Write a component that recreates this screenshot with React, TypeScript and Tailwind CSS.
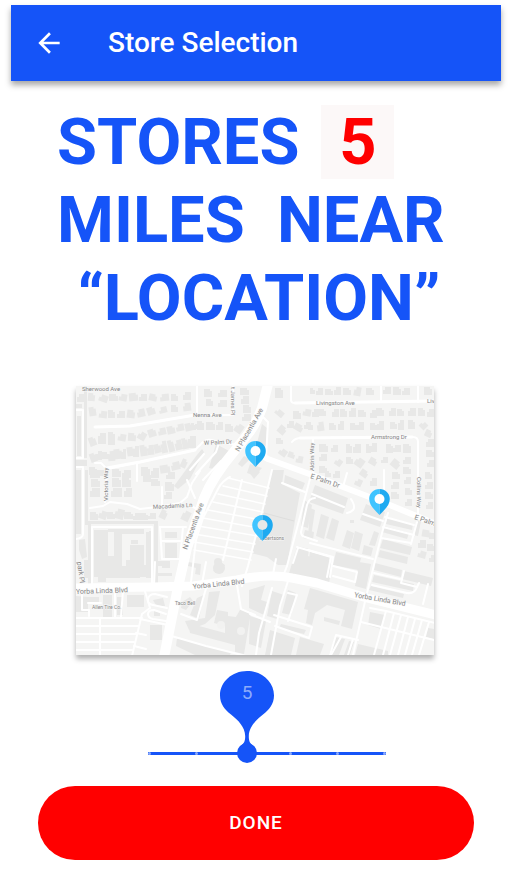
import { useState } from "react";
import { MdArrowBack } from "react-icons/md";

type House = [number, number, number, number, number?];

// x, y, width, height, rotation
const houses: House[] = [
  // Sherwood Ave, south side
  [77, 394, 9, 8, 0], [88, 393, 7, 8, 5], [99, 395, 9, 7, 20], [109, 394, 9, 7, 0], [119, 394, 8, 7, 10],
  [129, 393, 9, 8, -5], [139, 394, 8, 7, 0], [149, 394, 8, 7, 12], [160, 394, 9, 7, -6], [171, 394, 7, 7, 0],
  [183, 392, 8, 8, 0],
  // Nenna Ave, north side
  [89, 407, 7, 9, -8], [99, 411, 8, 7, 6], [108, 410, 7, 8, 0], [117, 411, 8, 7, 0], [127, 410, 8, 8, 8],
  [137, 409, 8, 8, -12], [147, 407, 8, 8, -18], [159, 407, 8, 6, -14], [171, 405, 7, 7, 0], [183, 403, 8, 8, -8],
  // Nenna Ave, south side
  [89, 437, 7, 9, -20], [98, 433, 8, 11, 0], [108, 432, 7, 13, 0], [118, 434, 8, 7, 10], [128, 433, 8, 8, 4],
  [138, 432, 8, 8, 30], [148, 429, 8, 8, -18], [158, 428, 8, 7, -12], [167, 426, 8, 8, -12], [176, 424, 8, 7, -10],
  [185, 423, 8, 8, -12], [195, 421, 7, 8, 0],
  // W Palm Dr, north side
  [90, 453, 7, 9, -20], [96, 451, 6, 9, 0], [102, 452, 7, 7, 0], [108, 451, 7, 10, -5], [114, 449, 8, 10, -8],
  [121, 449, 5, 10, 0], [127, 447, 8, 9, -8], [133, 446, 6, 11, 0], [140, 445, 7, 11, -8], [147, 445, 7, 10, -6],
  [154, 444, 7, 9, -14], [161, 441, 6, 12, -12], [168, 440, 6, 12, -14], [175, 440, 7, 10, -14],
  [182, 438, 6, 11, -12], [188, 436, 8, 12, 0],
  // W Palm Dr, south side
  [89, 467, 8, 8, 0], [98, 470, 6, 6, 0], [112, 469, 9, 8, 0], [122, 470, 9, 8, 0], [141, 467, 9, 9, 0],
  [151, 468, 8, 8, 0], [160, 465, 10, 8, -8], [171, 462, 9, 8, -14], [181, 459, 6, 9, 25],
  // Victoria Way
  [90, 470, 10, 8, 0], [91, 479, 9, 8, 0], [90, 488, 10, 9, 0], [112, 478, 9, 9, 0], [111, 488, 11, 9, 0],
  [122, 478, 9, 9, 0], [124, 488, 8, 9, 0], [143, 473, 8, 9, 0], [151, 470, 8, 8, 0], [151, 479, 9, 7, 0],
  [166, 472, 9, 7, 0], [165, 482, 9, 9, 0], [164, 492, 8, 7, 0],
  // Macadamia Ln, south side
  [90, 512, 8, 8, 0], [99, 511, 8, 8, 20], [107, 512, 8, 7, 0], [115, 509, 9, 10, 14], [124, 512, 9, 7, 0],
  [133, 513, 8, 7, 0], [140, 513, 8, 7, 0], [148, 513, 8, 6, 0], [160, 510, 7, 9, 25], [182, 511, 8, 10, 25],
  // St James Pl
  [204, 389, 8, 8, 0], [218, 390, 9, 7, 0], [206, 399, 7, 7, 0], [218, 400, 9, 7, 0], [240, 388, 9, 7, 0],
  [241, 396, 8, 8, 0], [243, 405, 8, 8, 0], [242, 414, 9, 7, 0],
  [191, 423, 5, 7, 0], [197, 423, 7, 7, 0], [206, 422, 9, 8, 0], [216, 422, 7, 8, 0], [225, 424, 8, 8, 0],
  [235, 424, 8, 9, 35],
  // East of N Placentia Ave
  [275, 388, 8, 10, 0], [275, 410, 9, 6, 40], [293, 411, 8, 8, 0], [303, 409, 8, 7, 10], [278, 426, 8, 8, 40],
  [287, 421, 7, 7, 0], [294, 424, 9, 7, 30], [304, 422, 7, 7, 0], [276, 438, 7, 6, 0], [279, 449, 8, 7, 35],
  [288, 452, 7, 6, 20], [296, 456, 7, 7, 10],
  // Livingston Ave
  [310, 388, 5, 6, 0], [316, 388, 7, 7, 0], [325, 389, 8, 6, 0], [334, 387, 7, 8, 0], [343, 388, 8, 7, 0],
  [354, 387, 7, 9, 10], [366, 388, 8, 7, 0], [383, 387, 8, 7, 0], [393, 387, 8, 8, 0], [402, 388, 8, 7, 0],
  [424, 387, 8, 8, 0],
  [312, 409, 7, 8, 0], [319, 409, 7, 7, 0], [332, 409, 7, 8, 0], [340, 409, 7, 8, 0], [349, 408, 7, 9, 0],
  [358, 410, 8, 7, 0], [370, 410, 7, 8, 0], [376, 408, 8, 8, 0], [389, 408, 7, 8, 0], [397, 409, 7, 7, 0],
  [408, 408, 8, 8, 0], [418, 408, 7, 8, 0], [427, 409, 7, 8, 0],
  // Armstrong Dr, north side
  [308, 423, 5, 7, 0], [317, 422, 7, 9, -8], [329, 423, 7, 7, 0], [338, 421, 6, 9, 0], [350, 423, 7, 7, 0],
  [357, 422, 7, 8, 0], [370, 423, 7, 7, 0], [377, 421, 7, 9, 0], [390, 422, 7, 7, 0], [398, 420, 6, 10, 0],
  [408, 420, 7, 9, 0], [420, 422, 7, 7, 45], [425, 430, 7, 7, 25], [426, 439, 8, 8, 0], [426, 450, 8, 7, 0],
  [427, 460, 7, 7, 0],
  // Armstrong Dr, south side
  [319, 444, 9, 8, 0], [331, 445, 7, 7, 0], [346, 444, 6, 9, 0], [353, 444, 8, 9, 0], [366, 444, 5, 9, 0],
  [370, 443, 7, 9, 0], [386, 444, 7, 9, 0], [393, 445, 8, 7, 0], [403, 444, 8, 9, 0],
  [319, 454, 8, 7, 0], [319, 466, 8, 7, 0], [335, 459, 7, 7, 35], [346, 457, 7, 7, 0], [355, 458, 9, 9, 35],
  [369, 458, 8, 7, 30], [381, 457, 7, 6, 0], [391, 460, 9, 8, 40], [403, 457, 8, 7, 0], [403, 467, 8, 7, 0],
  // North of E Palm Dr
  [333, 471, 7, 7, 0], [325, 471, 6, 6, 0], [355, 479, 7, 7, 25], [360, 470, 8, 7, 35], [370, 478, 7, 8, 0],
  [392, 472, 8, 7, 0], [391, 482, 8, 7, 0], [391, 492, 8, 7, 0], [404, 477, 7, 7, 0], [405, 488, 7, 7, 0],
  [405, 499, 7, 7, 0], [425, 472, 7, 7, 0], [425, 482, 8, 7, 0], [425, 492, 8, 7, 0], [426, 502, 7, 7, 0],
  // South of E Palm Dr
  [422, 530, 9, 7, 10], [418, 540, 8, 8, 0], [429, 533, 7, 6, 0], [418, 551, 8, 7, 15], [427, 544, 8, 7, 0],
  [429, 555, 6, 7, 0],
];

const buildings = [
  // West frontage
  "M84 386h3v72h-3z", "M76 404h6v4h-6z", "M77 416h4v40h-4z", "M76 460h11v6h-11z", "M76 470h5v64h-5z",
  "M85 470h3v55h-3z", "M79 540l6-1 2 18-5 2-3-9z",
  // Shopping block
  "M88 521h70v64h-4v-61h-63v61h-3z", "M94 530h14v26h6v-27h30v5h-22v32h8v-21h14v20h5v-34h4v46H94z",
  "M108 529h36v3h-36z", "M131 540h7v4h-7z", "M98 532h8v50h-8z", "M146 532h6v46h-6z",
  "M165 532h12v6h-12z", "M165 543h12v15h-12z", "M158 561h12v5h-12z",
  "M84 560h6v18h-6z", "M98 560h16v6h12v-6h14v18h-42z", "M157 573h15v3h-15z", "M162 565h8v3h-8z",
  // Triangular lots beside the avenue
  "M216 444l15 8-9 19-13-3z", "M262 424l5 4-1 18-9-3z", "M244 456l6 3-8 8-4-3z", "M250 464l12 4-7 8-8-3z",
  "M197 455l5-6 2 3-14 27-12 10-4-3z", "M249 472l6-4 5 4-6 7z",
  // Albertsons
  "M272 470h12l-2 14 18 9-13 72h-9l-11-8-16-4z",
  "M285 475l20 8-3 7-18-7z", "M304 500l8 5-4 23-7-2z", "M305 530l9 2-1 8-10-2z", "M297 546l12 3-2 16-14-2z",
  // Along E Palm Dr
  "M315 485l33 13-5 16-34-12z", "M310 508l5 2-4 27h-3z", "M321 514l8 3-5 22-8-3z", "M332 518l7 3-5 20-8-3z",
  "M347 530l7 3-4 16-8-3z", "M355 531l8 3-4 17-8-3z", "M366 504l19 8-5 15-20-7z", "M374 531l5 2-4 13-6-1z",
  "M364 545l9 3-2 8-9-2z", "M350 520h4v3h-4z", "M336 552l25 6-3 12-25-5z",
  "M310 551l20 5-3 16-19-5z", "M387 517l26 7-1 6-26-6z", "M384 526l25 7-2 6-25-7z",
  "M383 539l29 8-2 8-30-7z", "M380 550l28 7-1 7-29-7z", "M417 520l4 1-3 15-5-1z",
  // Between the lots north of Yorba Linda Blvd
  "M295 553l38 9-5 26-40-11z", "M359 562l12 2-5 25-11-3z", "M375 563l27 7-1 7-27-7z", "M374 575l40 9-1 7-41-9z",
  "M404 571l29 7-2 8-29-7z", "M371 586l33 8-1 4-34-8z",
  "M188 562l13 2-1 11-5-1 1-6-8-2z", "M213 571l7-9 5 3-5 9z",
  // South of Yorba Linda Blvd, west half
  "M127 595h17v12h-17z", "M103 595h9v22h-9z", "M76 596l12 1v15H76z", "M83 597h16v5H83z", "M117 597h6v18h-6z",
  "M150 625h12v15h-12z", "M182 602l8-5 3 4-7 9-5-2z", "M153 600l10-2 2 8-8 1z", "M154 611h6v5h-6z",
  "M197 598l7-3-5 24-9-4z", "M209 592l11-1-5 24-10 9-16 6-4-9 20-3z",
  "M188 623l37 10v-7l-11-3 3-13 11 2v4l8 1 5-9 10 4-7 42-9-2v-7l-45-12z",
  "M177 638l54 14-1 3h-35l-19-9z", "M237 615l8 2-1 6-8-1z",
  // South of Yorba Linda Blvd, east half
  "M249 590l16-5-4 15 6 2-3 13-15-7z", "M250 616l16 5-5 27-12-4z", "M272 591l12 4-7 24-10-3z", "M288 590l8 3-5 22-9-2z",
  "M310 588l48 14-6 27-11-3 4-16-18-5-12 8-3 12-6-2 2-13-4-1z", "M324 617l16 4-1 4-15-4z",
  "M281 624l25 6-2 4-25-6z", "M270 630l25 8-4 17h-26z", "M300 637l24 7-4 11h-24z", "M335 637l10 2-6 16h-10z",
  "M349 641l5 1-4 13h-6z", "M370 612l15 3-4 14-13-4z", "M428 628l6 1v10l-8-2z", "M358 644l30 7v4h-33z",
];

const thinRoads = [
  // West side streets
  "M76 410h7v48h-7", "M76 467h7v67q0 4-7 5", "M92 588v-61h60v62",
  "M95 463l6 0 6 6 33-7 55-12 8-8q4-4 12-1l27 5", "M107 468l-2 34", "M137 463v18",
  "M95 427l35-1 65-11h38", "M233 415v-29", "M197 386v28",
  "M90 508l13-2 7-4 17 2 13 5 17-2 23-4 7-6 5-14 8-12", "M162 487v18",
  "M160 527h26", "M160 527l2 32h18l3-32", "M162 541h20", "M187 480l8 18", "M190 470l14-16",
  "M203 480l18-19", "M196 474l20-22 3-9", "M193 507l12 6",
  // East side streets
  "M291 386v14q0 3 4 3l139-2", "M381 386v16", "M418 386v16", "M263 417l5 5-2 36",
  "M292 442q3-4 9-4l112-1q5 0 5 5v73", "M313 438v36", "M347 473l-4 14", "M384 470v31",
  "M351 499q5 8 2 11t-6 3", "M312 494l32 13", "M363 514l20 7",
  // Supermarket surroundings
  "M272 470l-9 38-15 58-6 20", "M311 475l-24 91-5 13", "M282 483l23 9", "M315 498q-6 0-8 7l-6 27q0 4 4 5l12 4",
  "M230 477q-8 4-12 12l-15 29-7 22-5 42", "M242 480l-9 38-10 42", "M298 548l-5 15",
  "M276 559l-3 15", "M297 547l34 10-4 20",
  // Lots south of E Palm Dr
  "M388 513l-6 20-16 64-13 58", "M385 517l29 8", "M383 527l31 8", "M381 538l30 5", "M417 522l-6 22",
  "M310 543l63 16", "M308 550l25 7-3 20", "M374 573l26 6", "M372 585l35 8q8 1 10-6l2-4",
  "M404 571l-3 12 16 4", "M333 566l24 6-2 10-22-6", "M428 584l-5 20",
  // Lots south of Yorba Linda Blvd
  "M82 588v22h7v6", "M88 603h13", "M115 592v26", "M123 590l-2 27", "M144 588l6 20-8 6-10 42",
  "M76 618h66", "M76 626h62", "M76 634h60", "M76 642h58", "M76 650h56", "M100 618v37",
  "M167 597l-12-3q-6 0-7 5t5 6l14 3", "M166 614l-12-4q-6 0-6 4t5 5l13 2", "M140 619l28 6", "M136 633l10 2", "M134 646l12 3",
  "M207 585l-10 35-16-6", "M168 635l38 11 52 13", "M206 562l-4 22", "M237 585l4 24 14 6",
  "M155 562l-1 24", "M289 578l-9 28-9 49", "M272 588l-13 45-3 22", "M288 593l9 2-9 26",
  "M250 614l20 8", "M274 615l38 12-3 11-34-12", "M341 637l-10 18", "M353 639l-5 16", "M330 655l6-20 22 5",
  "M370 608l16 3 49 12", "M361 622l73 18", "M386 611l-12 44", "M394 613l-11 42", "M401 615l-11 40",
  "M408 617l-10 38", "M415 619l-10 36", "M422 620l-10 35", "M429 622l-10 33",
];

const parkingRows = [0, 1, 2, 3, 4, 5, 6, 7, 8, 9];

type Label = { x: number; y: number; rotate?: number; size?: number; text: string };

const labels: Label[] = [
  { x: 82, y: 391, text: "Sherwood Ave" },
  { x: 193, y: 417, text: "Nenna Ave" },
  { x: 231, y: 387, rotate: 90, text: "t James Pl" },
  { x: 204, y: 445, rotate: -3, text: "W Palm Dr" },
  { x: 239, y: 452, rotate: -60, size: 7, text: "N Placentia Ave" },
  { x: 187, y: 550, rotate: -70, size: 7, text: "N Placentia Ave" },
  { x: 316, y: 405, text: "Livingston Ave" },
  { x: 427, y: 403, text: "Liv" },
  { x: 371, y: 439, text: "Armstrong Dr" },
  { x: 314, y: 471, rotate: -90, text: "Aldrin Way" },
  { x: 310, y: 478, rotate: 19, size: 7, text: "E Palm Dr" },
  { x: 414, y: 519, rotate: 19, size: 7, text: "E Palm" },
  { x: 417, y: 477, rotate: 90, text: "Collins Way" },
  { x: 108, y: 501, rotate: -90, text: "Victoria Way" },
  { x: 153, y: 509, rotate: -3, text: "Macadamia Ln" },
  { x: 260, y: 540, size: 5, text: "Albertsons" },
  { x: 76, y: 594, rotate: -2, size: 7, text: "Yorba Linda Blvd" },
  { x: 193, y: 589, rotate: -6, size: 7, text: "Yorba Linda Blvd" },
  { x: 354, y: 597, rotate: 10, size: 7, text: "Yorba Linda Blvd" },
  { x: 92, y: 609, size: 5, text: "Allen Tire Co." },
  { x: 175, y: 605, size: 5, text: "Taco Bell" },
  { x: 77, y: 562, rotate: 82, size: 7, text: "park Pl" },
];

function Pin({ x, y, hole = "#ffffff" }: { x: number; y: number; hole?: string }) {
  return (
    <g transform={`translate(${x} ${y})`}>
      <path d="M0-26C-6-26-10.300-21.500-10.300-16C-10.300-9.500-5-5.500 0 0Z" fill="#40c4ff" />
      <path d="M0-26C6-26 10.300-21.500 10.300-16C10.300-9.500 5-5.500 0 0Z" fill="#1eaaf1" />
      <circle cx="0" cy="-16" r="5" fill={hole} />
    </g>
  );
}

function StoreMap() {
  return (
    <svg
      viewBox="76 386 358 269"
      role="img"
      aria-label="Map of nearby stores"
      className="block w-full max-w-[358px] bg-[#f5f5f4] shadow-[0_4px_5px_rgba(0,0,0,0.3)]"
    >
      <g fill="#e8e8e7">
        {houses.map(([x, y, w, h, r = 0], i) => (
          <path
            key={i}
            transform={`rotate(${r} ${x + w / 2} ${y + h / 2})`}
            d={
              i % 2
                ? `M${x} ${y}h${w - 2}v2h2v${h - 2}h${-w}z`
                : `M${x + 2} ${y}h${w - 2}v${h}h${-w}v${3 - h}h2z`
            }
          />
        ))}
        {buildings.map((d) => (
          <path key={d} d={d} />
        ))}
        <circle cx="219" cy="568" r="6" />
        <circle cx="218" cy="562" r="4" />
      </g>
      <g fill="#f2f2f1">
        <circle cx="221" cy="625" r="4" />
        <circle cx="241" cy="631" r="4" />
      </g>
      <path d="M264 513l30 8" stroke="#dededd" strokeWidth="1" />
      <g fill="none" stroke="#ffffff" strokeLinejoin="round" strokeLinecap="round">
        {thinRoads.map((d) => (
          <path key={d} d={d} strokeWidth="2" />
        ))}
        {parkingRows.map((n) => (
          <path
            key={n}
            d={`M${Math.max(228 - n * 5, 194)} ${478 + n * 8}L${269 - n * 2} ${488 + n * 8}`}
            strokeWidth="1.500"
          />
        ))}
        <path d="M95 427l35-1 65-11M107 468l33-6 55-12M295 403l139-2M300 438l112-1" strokeWidth="3" />
        <path d="M248 448L268 459L315 476L330 482L380 501L436 524" strokeWidth="6" />
        <path d="M76 588L153 587L193 586L237 580Q270 573 292 578L317 583L367 598L436 615" strokeWidth="9" />
        <path d="M268 384L262 408Q256 424 248 434L224 464Q206 488 200 510L187 548L178 587L164 657" strokeWidth="10" />
      </g>
      <g fill="#858585" stroke="#f8f8f8" strokeWidth="1" paintOrder="stroke">
        {labels.map(({ x, y, rotate = 0, size = 6, text }) => (
          <text key={`${x}-${y}`} fontSize={size} transform={`translate(${x} ${y}) rotate(${rotate})`}>
            {text}
          </text>
        ))}
      </g>
      <Pin x={255.5} y={467} />
      <Pin x={262.5} y={541} hole="#e8e8e7" />
      <Pin x={379.5} y={515} />
    </svg>
  );
}

const MAX_MILES = 12;

export default function App() {
  const [miles, setMiles] = useState(5);

  const changeMiles = (value: string) => {
    const next = Number(value);
    if (!Number.isNaN(next)) setMiles(Math.min(MAX_MILES, Math.max(0, Math.round(next))));
  };

  return (
    <div className="flex min-h-screen flex-col bg-white pt-[5px] font-[Roboto,sans-serif]">
      <header className="mx-[11px] flex h-[76px] items-center bg-[#1554f8] px-[22px] text-white shadow-[0_4px_6px_rgba(0,0,0,0.35)]">
        <button type="button" aria-label="Back" className="flex h-8 w-8 items-center justify-center">
          <MdArrowBack size={32} />
        </button>
        <h1 className="ml-[43px] text-[28px] leading-8 font-medium">Store Selection</h1>
      </header>

      <main className="flex flex-col px-[38px] pb-[18px]">
        <div className="mt-[22px] w-fit pl-[19px] text-[65px] leading-[78px] font-bold whitespace-pre text-[#1554f8]">
          <div className="flex items-center gap-[22px]">
            <label htmlFor="miles">STORES</label>
            <input
              id="miles"
              type="text"
              inputMode="numeric"
              value={miles}
              onChange={(e) => changeMiles(e.target.value)}
              className="h-[74px] w-[73px] bg-[#fcf8f8] text-center text-[#ff0000]"
            />
          </div>
          <div className="text-center">{"MILES  NEAR"}</div>
          <div className="text-center">{" “LOCATION”"}</div>
        </div>

        <div className="mt-[49px] flex justify-center pr-[2px]">
          <StoreMap />
        </div>

        <div className="mt-4 flex justify-center pl-[21px]">
          <div className="relative w-[254px] pt-[72px]">
            <div className="relative flex h-5 items-center px-2">
              <div className="flex h-[3px] w-full items-center justify-between bg-[#1554f8]">
                {[0, 1, 2, 3, 4, 5].map((tick) => (
                  <span key={tick} className="h-[3px] w-[3px] rounded-full bg-[#8cabfb]" />
                ))}
              </div>
              <input
                type="range"
                aria-label="Distance in miles"
                min={0}
                max={MAX_MILES}
                value={miles}
                onChange={(e) => changeMiles(e.target.value)}
                className="absolute inset-0 m-0 h-5 w-full cursor-pointer appearance-none bg-transparent [&::-webkit-slider-thumb]:h-5 [&::-webkit-slider-thumb]:w-5 [&::-webkit-slider-thumb]:appearance-none [&::-webkit-slider-thumb]:rounded-full [&::-webkit-slider-thumb]:bg-[#1554f8]"
              />
            </div>
            <div className="pointer-events-none absolute inset-x-[10px] top-0">
              <output
                htmlFor="miles"
                className="absolute top-0 flex h-[76px] w-[54px] -translate-x-1/2 justify-center"
                style={{ left: `${(miles / MAX_MILES) * 100}%` }}
              >
                <svg viewBox="0 0 54 76" className="absolute inset-0 h-full w-full" fill="#1554f8" aria-hidden="true">
                  <path d="M27 0C42 0 54 11 54 24.500C54 33 49 39 43 43.500C36 49 29 56 28.800 65C28.800 70 29.500 72 34 76H20C24.500 72 25.200 70 25.200 65C25 56 18 49 11 43.500C5 39 0 33 0 24.500C0 11 12 0 27 0Z" />
                </svg>
                <span className="relative pt-[10px] text-[19px] leading-6 text-[#8cabfb]">{miles}</span>
              </output>
            </div>
          </div>
        </div>

        <button
          type="button"
          className="mt-[23px] h-[74px] w-full rounded-full bg-[#ff0000] text-[19px] font-medium tracking-wider text-white"
        >
          DONE
        </button>
      </main>
    </div>
  );
}
